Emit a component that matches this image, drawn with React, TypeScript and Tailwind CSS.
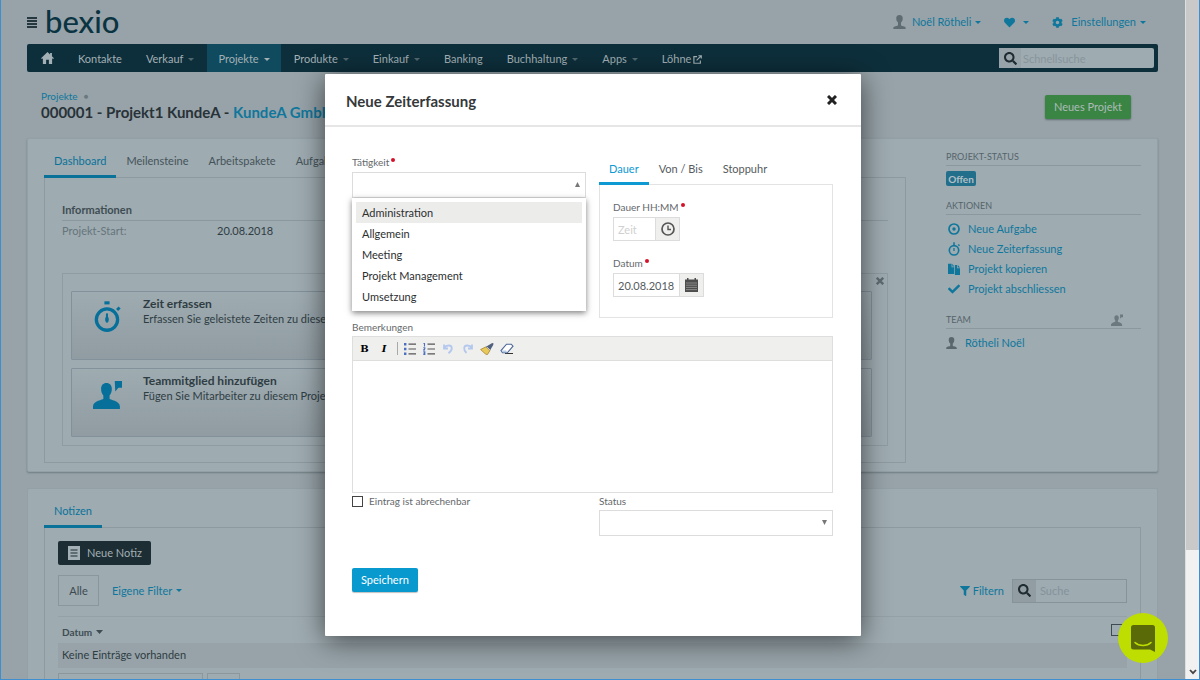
import { useState } from "react";
import type { ReactNode } from "react";
import { FaCheck, FaCog, FaFilter, FaHeart, FaSearch } from "react-icons/fa";

const navItems = [
  { label: "Kontakte" },
  { label: "Verkauf", menu: true },
  { label: "Projekte", menu: true, active: true },
  { label: "Produkte", menu: true },
  { label: "Einkauf", menu: true },
  { label: "Banking" },
  { label: "Buchhaltung", menu: true },
  { label: "Apps", menu: true },
  { label: "Löhne", external: true },
];

const activities = ["Administration", "Allgemein", "Meeting", "Projekt Management", "Umsetzung"];

function Caret({ className = "h-[3px] w-[6px]" }: { className?: string }) {
  return (
    <svg viewBox="0 0 8 4" preserveAspectRatio="none" className={`shrink-0 ${className}`} fill="currentColor" aria-hidden="true">
      <path d="M0 0h8L4 4z" />
    </svg>
  );
}

function Person({ className = "" }: { className?: string }) {
  return (
    <svg viewBox="0 0 14 16" className={className} fill="currentColor" aria-hidden="true">
      <path d="M7 0c2.600 0 3.900 1.700 3.700 4.200-.1 1.900-.9 3.400-2 4.300v3.300c0 1 5.300.8 5.300 2.900V16H0v-1.300c0-2.100 5.300-1.900 5.300-2.900V8.500c-1.100-.9-1.900-2.400-2-4.300C3.100 1.700 4.400 0 7 0z" />
    </svg>
  );
}

function PersonFlag({ className = "" }: { className?: string }) {
  return (
    <svg viewBox="0 0 28 28" className={className} fill="currentColor" aria-hidden="true">
      <path d="M13 3c3.200 0 5.200 2.200 5.200 5.600 0 2.800-1 5-2.200 6.300v3.300c0 1 10 2 10 7.300V28H0v-2.500C0 20.200 10 19.200 10 18.200v-3.300C8.800 13.600 7.800 11.400 7.800 8.600 7.800 5.200 9.800 3 13 3z" />
      <path d="M21 1h7.500v6.500h-4L21.500 11z" />
    </svg>
  );
}

function Stopwatch({ className = "" }: { className?: string }) {
  return (
    <svg viewBox="0 0 26 30" className={className} fill="none" stroke="currentColor" aria-hidden="true">
      <circle cx="12.500" cy="18" r="10.300" strokeWidth="3.200" />
      <path d="M10 1.800h5" strokeWidth="3" />
      <path d="M22.500 6.500l2 2" strokeWidth="3.400" />
      <path d="M12.500 12v6" strokeWidth="2" />
      <ellipse cx="12.500" cy="18" rx="1.200" ry="2.500" fill="currentColor" />
    </svg>
  );
}

function SmallStopwatch() {
  return (
    <svg viewBox="0 0 12 14" className="h-[14px] w-3" fill="none" stroke="currentColor" aria-hidden="true">
      <circle cx="6" cy="8.300" r="4.700" strokeWidth="1.600" />
      <path d="M6 .3v3M10.300 2.500l1.200 1.200" strokeWidth="1.500" />
      <path d="M6 6v3" strokeWidth="1.300" />
    </svg>
  );
}

function Cross({ className = "" }: { className?: string }) {
  return (
    <svg viewBox="0 0 10 10" className={className} stroke="currentColor" strokeWidth="3" aria-hidden="true">
      <path d="M1 1l8 8M9 1l-8 8" />
    </svg>
  );
}

function Required() {
  return <span className="ml-0.5 inline-block size-1 rounded-full bg-[#d3112b] align-super" aria-hidden="true" />;
}

function Header() {
  return (
    <header className="flex h-11 items-center justify-between pr-3">
      <div className="flex items-center gap-2">
        <button aria-label="Menü" className="flex h-[11px] w-[10px] flex-col justify-between">
          <span className="h-[2px] w-full bg-[#26383f]" />
          <span className="h-[2px] w-full bg-[#26383f]" />
          <span className="h-[2px] w-full bg-[#26383f]" />
          <span className="h-[2px] w-full bg-[#26383f]" />
        </button>
        <a href="#start" className="pb-0.5 text-[31px] leading-8 font-medium text-[#0b3442]">bexio</a>
      </div>
      <div className="flex items-center text-[#0f779c]">
        <button className="flex items-center">
          <Person className="mr-1.5 h-[14px] w-[13px] text-[#5f6c71]" />
          Noël Rötheli
          <Caret className="ml-1 h-[3px] w-[6px]" />
        </button>
        <button aria-label="Favoriten" className="ml-[23px] flex items-center">
          <FaHeart className="size-[11px]" />
          <Caret className="ml-2 h-[3px] w-[6px]" />
        </button>
        <button className="ml-[23px] flex items-center">
          <FaCog className="mr-2 size-[11px]" />
          Einstellungen
          <Caret className="ml-1 h-[3px] w-[6px]" />
        </button>
      </div>
    </header>
  );
}

function NavBar() {
  return (
    <nav className="flex h-7 items-stretch gap-[2px] rounded-[2px] bg-[#0d2f3b] pr-1 text-[#a3b0b5]">
      <a href="#home" aria-label="Home" className="flex w-[38px] items-center pl-[14px]">
        <svg viewBox="0 0 14 13" className="h-[12px] w-[13px]" fill="currentColor" aria-hidden="true">
          <path d="M7 0l2.800 2.600V1h2v3.500L14 6.700l-1 1-1-.9V13H8.500V8.500h-3V13H2V6.800l-1 .9-1-1z" />
        </svg>
      </a>
      {navItems.map((item) => (
        <a
          key={item.label}
          href={`#${item.label}`}
          className={`flex items-center px-[11px] pt-0.5 ${item.active ? "bg-[#104a5e]" : ""}`}
        >
          {item.label}
          {item.menu && <Caret className={`ml-[5px] h-[3px] w-[6px] ${item.active ? "text-[#a3b0b5]" : "text-[#52686f]"}`} />}
          {item.external && (
            <svg viewBox="0 0 10 10" className="ml-0.5 size-[9px]" fill="none" stroke="currentColor" strokeWidth="1.300" aria-hidden="true">
              <path d="M4.500 1.800H1v7.400h7.200V6M4 6l5-5M6 .8h3.200V4" />
            </svg>
          )}
        </a>
      ))}
      <label className="my-[4px] ml-auto flex w-[155px] items-center rounded-[2px] bg-[#9eabb1]">
        <span className="flex h-full w-[22px] shrink-0 items-center justify-center bg-[#97a3a9]">
          <FaSearch className="size-[13px] text-[#1e2b30]" />
        </span>
        <input
          aria-label="Schnellsuche"
          placeholder="Schnellsuche"
          className="h-full w-full min-w-0 bg-transparent px-0.5 outline-none placeholder:text-[#87959b]"
        />
      </label>
    </nav>
  );
}

function TabLink({ children, active }: { children: ReactNode; active?: boolean }) {
  return (
    <button
      className={`relative flex h-[33px] items-center border-b-[3px] px-2.5 pt-0.5 ${
        active ? "border-[#0a7299] text-[#0a7299]" : "border-transparent text-[#455359]"
      }`}
    >
      {children}
    </button>
  );
}

function ActionBox({ icon, title, text }: { icon: ReactNode; title: string; text: string }) {
  return (
    <button className="flex h-[69px] w-full items-start rounded-[1px] border border-[#82919a] bg-linear-to-b from-[#9eabb1] to-[#909ca2] text-left text-[#2f3d43]">
      <span className="flex w-[71px] shrink-0 justify-center pt-[9px] text-[#06709a]">{icon}</span>
      <span className="flex flex-col pt-1 leading-[15px]">
        <strong className="text-[12px]">{title}</strong>
        <span>{text}</span>
      </span>
    </button>
  );
}

function SideHeading({ children }: { children: ReactNode }) {
  return (
    <h2 className="flex items-center justify-between border-b border-[#8b999f] pb-px text-[9px] leading-[14px] text-[#55646a]">
      {children}
    </h2>
  );
}

function SideAction({ icon, children }: { icon: ReactNode; children: ReactNode }) {
  return (
    <a href="#aktion" className="flex h-5 items-center gap-2 pl-0.5 text-[#0f779c]">
      <span className="flex w-3 justify-center">{icon}</span>
      {children}
    </a>
  );
}

function ProjectCard() {
  return (
    <section className="mt-[17px] flex rounded-[2px] border border-[#93a0a6] bg-[#9eabb1] pt-[6px] pr-4 pb-2 pl-4 shadow-[0_1px_2px_#6f7d83]">
      <div className="flex-1">
        <div className="flex">
          <TabLink active>Dashboard</TabLink>
          <TabLink>Meilensteine</TabLink>
          <TabLink>Arbeitspakete</TabLink>
          <TabLink>Aufgaben</TabLink>
        </div>
        <div className="-mt-px border border-[#8d9aa0] px-[17px] pt-6 pb-4">
          <h2 className="border-b border-[#8b999f] pb-0.5 text-[11px] leading-4 font-bold text-[#3f4d53]">Informationen</h2>
          <dl className="flex h-5 items-center">
            <dt className="w-[155px] text-[#66757b]">Projekt-Start:</dt>
            <dd className="text-[#2f3d43]">20.08.2018</dd>
          </dl>
          <div className="mt-8 flex border border-[#8f9ca2] pt-[17px] pb-2 pl-2">
            <div className="flex flex-1 flex-col gap-2">
              <ActionBox
                icon={<Stopwatch className="h-[31px] w-[27px]" />}
                title="Zeit erfassen"
                text="Erfassen Sie geleistete Zeiten zu diesem Projekt"
              />
              <ActionBox
                icon={<PersonFlag className="mt-[2px] h-[29px] w-[29px]" />}
                title="Teammitglied hinzufügen"
                text="Fügen Sie Mitarbeiter zu diesem Projekt hinzu"
              />
            </div>
            <button aria-label="Schliessen" className="-mt-4 mr-px ml-[2px] size-3 p-0.5 text-[#5e6b70]">
              <Cross className="size-2" />
            </button>
          </div>
        </div>
      </div>
      <aside className="ml-10 w-[195px] pt-[5px]">
        <SideHeading>PROJEKT-STATUS</SideHeading>
        <span className="mt-[5px] mb-[13px] flex h-[15px] w-[30px] items-center justify-center rounded-[2px] bg-[#226f8c] text-[10px] font-bold text-[#b2bfc5]">
          Offen
        </span>
        <SideHeading>AKTIONEN</SideHeading>
        <div className="mt-1 mb-[14px]">
          <SideAction
            icon={
              <svg viewBox="0 0 12 12" className="size-3" fill="none" stroke="currentColor" strokeWidth="1.700" aria-hidden="true">
                <circle cx="6" cy="6" r="5" />
                <circle cx="6" cy="6" r="1.700" fill="currentColor" stroke="none" />
              </svg>
            }
          >
            Neue Aufgabe
          </SideAction>
          <SideAction icon={<SmallStopwatch />}>Neue Zeiterfassung</SideAction>
          <SideAction
            icon={
              <svg viewBox="0 0 12 12" className="size-3" fill="currentColor" aria-hidden="true">
                <path d="M0 .8h3.600v3.400h2.600V11H0zM4.300.8l2 2.600h-2z" />
                <path d="M6.900 2h2.200v3.200H12V12H6.900zM9.800 2L12 4.500H9.800z" />
              </svg>
            }
          >
            Projekt kopieren
          </SideAction>
          <SideAction icon={<FaCheck className="size-3" />}>Projekt abschliessen</SideAction>
        </div>
        <SideHeading>
          TEAM
          <PersonFlag className="mr-[18px] h-3 w-3 text-[#6c797e]" />
        </SideHeading>
        <a href="#team" className="mt-1 flex h-5 items-center gap-2 text-[#0f779c]">
          <Person className="h-3 w-[11px] text-[#5a676c]" />
          Rötheli Noël
        </a>
      </aside>
    </section>
  );
}

function NotesCard() {
  return (
    <section className="mt-4 rounded-t-[2px] border border-[#93a0a6] bg-[#9eabb1] px-4 pt-[6px]">
      <div className="flex">
        <TabLink active>Notizen</TabLink>
      </div>
      <div className="-mt-px border border-[#8d9aa0] px-[13px] pt-[13px]">
        <button className="flex h-6 items-center rounded-[2px] bg-[#1c2d33] pr-[9px] pl-[10px] text-[#a3b0b5]">
          <svg viewBox="0 0 12 14" className="mr-[7px] h-[14px] w-3" aria-hidden="true">
            <path fill="#a3b0b5" d="M0 0h12v14H0z" />
            <path stroke="#1c2d33" strokeWidth="1.200" d="M2.500 4h7M2.500 7h7M2.500 10h7" />
          </svg>
          Neue Notiz
        </button>
        <div className="mt-[10px] flex items-center">
          <button className="h-[31px] w-[41px] border border-[#8a979d] text-[#3c4a50]">Alle</button>
          <button className="ml-[13px] flex items-center text-[#0f779c]">
            Eigene Filter
            <Caret className="ml-1 h-[3px] w-[6px]" />
          </button>
          <button className="ml-auto flex items-center gap-[3px] text-[#0f779c]">
            <FaFilter className="size-[10px]" />
            Filtern
          </button>
          <label className="ml-2 flex h-6 w-[115px] items-center border border-[#86949a]">
            <span className="flex h-full w-[23px] shrink-0 items-center justify-center bg-[#919da3]">
              <FaSearch className="size-[13px] text-[#1e2b30]" />
            </span>
            <input
              aria-label="Suche"
              placeholder="Suche"
              className="h-full w-full min-w-0 bg-transparent px-1 outline-none placeholder:text-[#84929a]"
            />
          </label>
        </div>
        <table className="mt-[10px] w-full border-t border-[#94a1a7]">
          <thead>
            <tr className="h-[26px] text-left">
              <th className="pt-1 pl-1 text-[10px] font-bold text-[#3f4d53]">
                <button className="flex items-center">
                  Datum
                  <Caret className="ml-1 h-[4px] w-[7px]" />
                </button>
              </th>
              <th className="w-4">
                <input type="checkbox" aria-label="Alle auswählen" className="block size-[12px] appearance-none border border-[#3e4c52]" />
              </th>
            </tr>
          </thead>
          <tbody>
            <tr className="h-[25px] bg-[#97a3a9]">
              <td colSpan={2} className="pl-1 text-[#2f3d43]">Keine Einträge vorhanden</td>
            </tr>
          </tbody>
        </table>
        <div className="mt-[5px] flex gap-1">
          <input aria-label="Seite" className="h-6 w-[145px] border border-[#8a979d]" />
          <input aria-label="Anzahl" className="h-6 w-[33px] border border-[#8a979d]" />
        </div>
      </div>
    </section>
  );
}

function EditorToolbar() {
  const blue = "#4a6fc0";
  return (
    <div className="flex h-6 items-center border-b border-[#dededd] bg-[#efefee] pl-[5px] text-black">
      <button type="button" aria-label="Fett" className="w-[13px] text-center font-['DejaVu_Serif',serif] text-[10px] font-bold">B</button>
      <button type="button" aria-label="Kursiv" className="ml-[7px] w-3 text-center font-['DejaVu_Serif',serif] text-[10px] font-bold italic">I</button>
      <span className="ml-[7px] h-[13px] w-px bg-[#a9a9a9]" />
      <button type="button" aria-label="Liste" className="ml-1.5">
        <svg viewBox="0 0 12 12" className="size-3">
          <path fill={blue} d="M0 0h2.400v2.400H0zM0 4.800h2.400v2.400H0zM0 9.600h2.400V12H0z" />
          <path stroke="#555" strokeWidth="1.200" d="M4.500 1.200H12M4.500 6H12M4.500 10.800H12" />
        </svg>
      </button>
      <button type="button" aria-label="Nummerierte Liste" className="ml-[7px]">
        <svg viewBox="0 0 12 12" className="size-3">
          <path fill="none" stroke={blue} strokeWidth="1.100" d="M.5.500h1v3M.3 4.800h1.500v1L.5 7h1.600M.3 8.800h1.500v2.600H.3M.6 10.100h1.200" />
          <path stroke="#555" strokeWidth="1.200" d="M4.500 1.200H12M4.500 6H12M4.500 10.800H12" />
        </svg>
      </button>
      <button type="button" aria-label="Rückgängig" className="ml-[7px]">
        <svg viewBox="0 0 12 12" className="size-3" fill="none" stroke="#b4c8ee" strokeWidth="1.800">
          <path d="M2 1.500v4h4M2 5C4 2 9.500 1.300 9.800 5c.2 2.300-1.500 3.800-3.300 5.200" />
        </svg>
      </button>
      <button type="button" aria-label="Wiederholen" className="ml-2">
        <svg viewBox="0 0 12 12" className="size-3" fill="none" stroke="#b4c8ee" strokeWidth="1.800">
          <path d="M10 1.500v4H6M10 5C8 2 2.500 1.300 2.200 5c-.2 2.300 1 3.800 2.300 5" />
        </svg>
      </button>
      <button type="button" aria-label="Formatierung entfernen" className="ml-1.5">
        <svg viewBox="0 0 14 12" className="h-3 w-[14px]">
          <path fill="#e9c95c" stroke="#a58327" strokeWidth=".8" d="M.6 6.500L6 3.800l4 3.600-2.600 4.200L5.500 11z" />
          <path fill="#50617f" d="M6 3.700L12.200 0 13.600.4 13.200 2 10 7.400z" />
          <path stroke="#fff" strokeWidth=".7" d="M7 4.200l3 2.800" />
        </svg>
      </button>
      <button type="button" aria-label="Löschen" className="ml-1.5">
        <svg viewBox="0 0 14 12" className="h-3 w-[14px]">
          <path stroke="#333" strokeWidth="1" d="M5 10.500h8" />
          <path fill="#fff" stroke="#4a6796" strokeWidth="1.100" d="M6.500 1.200h4.800L13 3.200 7.300 9.800H2.500L1 7.600z" />
          <path fill="#b8cbe8" d="M1.500 7.500h4.600l1 1.800H2.700z" />
        </svg>
      </button>
    </div>
  );
}

function TimeDialog() {
  const [open, setOpen] = useState(true);
  const [activity, setActivity] = useState("");
  const label = "block text-[10px] leading-[14px] text-[#65696b]";
  return (
    <div
      role="dialog"
      aria-labelledby="dialog-title"
      className="w-[536px] rounded-[1px] bg-white pb-11 text-[#555b5e] shadow-[0_4px_28px_rgba(0,0,0,0.6)]"
    >
      <header className="flex h-[53px] items-center justify-between border-b-2 border-[#e6e6e6] pr-6 pl-[21px]">
        <h1 id="dialog-title" className="pt-0.5 text-[15px] font-bold text-[#35383a]">Neue Zeiterfassung</h1>
        <button aria-label="Schliessen" className="text-[#222]">
          <Cross className="size-[10px]" />
        </button>
      </header>
      <form className="pt-7 pr-7 pl-[27px]" onSubmit={(event) => event.preventDefault()}>
        <div className="grid grid-cols-2 gap-x-[13px]">
          <div>
            <label htmlFor="activity" className={label}>
              Tätigkeit
              <Required />
            </label>
            <div className="relative mt-[3px]">
              <select
                id="activity"
                value={activity}
                onMouseDown={(event) => {
                  event.preventDefault();
                  setOpen(!open);
                }}
                onChange={(event) => setActivity(event.target.value)}
                className="block h-[26px] w-full appearance-none border border-[#dcdcdc] bg-white px-2"
              >
                <option value="" />
                {activities.map((name) => (
                  <option key={name}>{name}</option>
                ))}
              </select>
              <Caret className="pointer-events-none absolute top-[10px] right-1.5 h-[5px] w-[5px] rotate-180 text-[#777]" />
              {open && (
                <ul className="absolute inset-x-0 top-full z-10 bg-white p-1 shadow-[0_2px_6px_rgba(0,0,0,0.5)]">
                  {activities.map((name) => (
                    <li key={name} className="first:bg-[#ececea]">
                      <button
                        type="button"
                        onClick={() => {
                          setActivity(name);
                          setOpen(false);
                        }}
                        className="block h-[21px] w-full px-1.5 text-left text-[#2c2f31]"
                      >
                        {name}
                      </button>
                    </li>
                  ))}
                </ul>
              )}
            </div>
          </div>
          <div>
            <div className="flex h-[30px]">
              <button type="button" className="border-b-[3px] border-[#0d9ad3] px-2.5 text-[#0d9ad3]">Dauer</button>
              <button type="button" className="border-b-[3px] border-transparent px-2.5">Von / Bis</button>
              <button type="button" className="border-b-[3px] border-transparent px-2.5">Stoppuhr</button>
            </div>
            <div className="-mt-px border border-[#e3e3e3] px-[13px] pt-[15px] pb-5">
              <label htmlFor="duration" className={label}>
                Dauer HH:MM
                <Required />
              </label>
              <div className="mt-[3px] flex">
                <input id="duration" placeholder="Zeit" className="h-6 w-[43px] border border-[#dcdcdc] px-1 outline-none placeholder:text-[#d0d0d0]" />
                <button type="button" aria-label="Zeit wählen" className="flex h-6 w-6 items-center justify-center border border-l-0 border-[#dcdcdc] bg-[#efefee]">
                  <svg viewBox="0 0 14 14" className="size-[14px]" fill="none" stroke="#555" strokeWidth="1.700">
                    <circle cx="7" cy="7" r="6" />
                    <path strokeWidth="1.400" d="M7 3.500V7.500h3" />
                  </svg>
                </button>
              </div>
              <label htmlFor="date" className={`mt-[15px] ${label}`}>
                Datum
                <Required />
              </label>
              <div className="mt-[3px] flex">
                <input id="date" defaultValue="20.08.2018" className="h-6 w-[67px] border border-[#dcdcdc] px-1 outline-none" />
                <button type="button" aria-label="Datum wählen" className="flex h-6 w-6 items-center justify-center border border-l-0 border-[#dcdcdc] bg-[#efefee]">
                  <svg viewBox="0 0 13 14" className="h-[14px] w-[13px]">
                    <path fill="#4d4d4d" d="M0 1.500h2V0h1.500v1.500h6V0H11v1.500h2V14H0z" />
                    <path stroke="#a5a5a5" strokeWidth=".7" d="M1 5h11M1 7.200h11M1 9.400h11M1 11.600h11" />
                  </svg>
                </button>
              </div>
            </div>
          </div>
        </div>
        <label htmlFor="remarks" className={`mt-0.5 ${label}`}>Bemerkungen</label>
        <div className="mt-[2px] border border-[#dedede]">
          <EditorToolbar />
          <textarea id="remarks" className="block h-[131px] w-full resize-none outline-none" />
        </div>
        <div className="mt-px grid grid-cols-2 gap-x-[13px]">
          <label className="flex h-[14px] items-center gap-1.5 text-[10px] text-[#65696b]">
            <input type="checkbox" className="size-[11px] appearance-none border border-[#444]" />
            Eintrag ist abrechenbar
          </label>
          <div>
            <label htmlFor="status" className={label}>Status</label>
            <div className="relative mt-[2px]">
              <select id="status" className="block h-[26px] w-full appearance-none border border-[#dcdcdc] bg-white px-2">
                <option value="" />
                <option>Offen</option>
              </select>
              <Caret className="pointer-events-none absolute top-[10px] right-1.5 h-[5px] w-[5px] text-[#777]" />
            </div>
          </div>
        </div>
        <button type="submit" className="mt-8 h-6 rounded-[2px] bg-[#0899cf] px-[9px] text-white shadow-[0_1px_1px_rgba(0,0,0,0.25)]">
          Speichern
        </button>
      </form>
    </div>
  );
}

function ScrollBar() {
  return (
    <div className="flex w-[14px] flex-col justify-between border-l border-[#dedede] bg-[#f1f1f1]" aria-hidden="true">
      <div className="h-[550px] bg-[#c9c9c9]" />
      <svg viewBox="0 0 8 6" className="mx-auto mb-1 h-[6px] w-2" fill="none" stroke="#444" strokeWidth="1.800">
        <path d="M1 1l3 3.200L7 1" />
      </svg>
    </div>
  );
}

export default function App() {
  return (
    <div className="flex h-screen overflow-hidden border-x border-b border-[#3f8fd0] bg-[#97a3a9] font-['Lato',sans-serif] text-[11px] leading-4">
      <div className="relative min-w-0 flex-1 overflow-hidden">
        <main className="pr-[27px] pl-[26px]">
          <Header />
          <NavBar />
          <div className="flex items-start justify-between pr-[27px] pl-[14px]">
            <div className="pt-[18px]">
              <a href="#projekte" className="flex items-center text-[10px] leading-[13px] text-[#0f779c]">
                Projekte
                <span className="ml-1.5 text-[8px] text-[#6b797f]">●</span>
              </a>
              <h1 className="text-[15px] leading-[18px] font-bold whitespace-nowrap text-[#283238]">
                000001 - Projekt1 KundeA - <a href="#kunde" className="text-[#0f779c]">KundeA GmbH</a>
              </h1>
            </div>
            <button className="mt-[23px] h-6 rounded-[2px] bg-[#3a8544] px-[9px] text-[#aebbb8] shadow-[0_1px_2px_#5f6d73]">Neues Projekt</button>
          </div>
          <ProjectCard />
          <NotesCard />
        </main>
        <div className="absolute inset-0 flex items-start justify-center pt-[74px]">
          <TimeDialog />
        </div>
        <button aria-label="Chat öffnen" className="absolute right-[17px] bottom-4 flex size-[50px] items-center justify-center rounded-full bg-[#bedd00]">
          <svg viewBox="0 0 24 27" className="h-[27px] w-6" aria-hidden="true">
            <path fill="#5b6a08" d="M2.500 0h19A2.500 2.500 0 0 1 24 2.500V27l-5-2.500H2.500A2.500 2.500 0 0 1 0 22V2.500A2.500 2.500 0 0 1 2.500 0z" />
            <path fill="none" stroke="#bedd00" strokeWidth="1.600" strokeLinecap="round" d="M4 17.500c4 4 12 4 16 0" />
          </svg>
        </button>
      </div>
      <ScrollBar />
    </div>
  );
}
